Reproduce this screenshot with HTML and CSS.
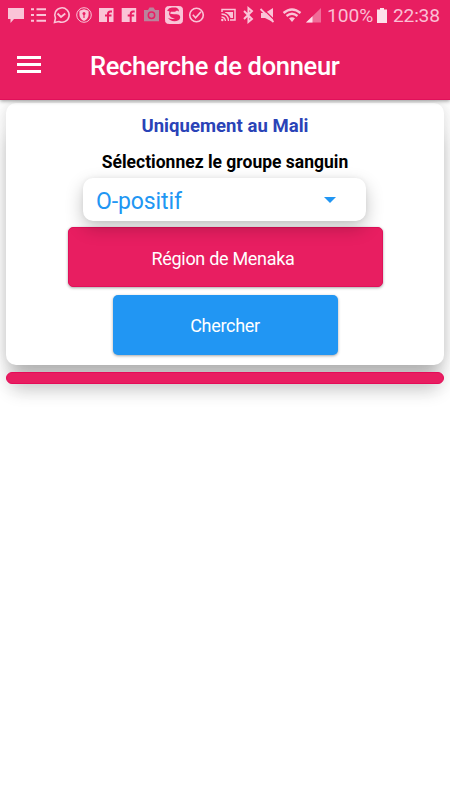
FILE: index.html
```html
<!DOCTYPE html>
<html lang="fr">
<head>
<meta charset="utf-8">
<title>Recherche de donneur</title>
<link rel="stylesheet" href="styles.css">
</head>
<body>
<header class="app-header">
  <div class="status">
    <svg class="status-icons" width="325" height="32" viewBox="0 0 325 32" fill="none" stroke="#fac4d7" stroke-width="1.6">
      <path d="M8 8H24V19H14L10.500 23V19H8Z" fill="#fac4d7" stroke="none"/>
      <path d="M31 9.200h3M31 15h3M31 20.800h3M36.500 9.200H46M36.500 15H46M36.500 20.800H46" stroke-width="2"/>
      <path d="M54.500 22.500l1-4.300A7.200 7.200 0 1 1 58.800 21.500Z"/><path d="M57.500 13.500l3.500 3.500 4.300-3.500" stroke-width="1.800"/>
      <circle cx="84" cy="15" r="7.300" stroke-width="1"/><path d="M84 9.200l4.600 1.600v4.100c0 2.600-2 4.800-4.600 6-2.600-1.200-4.600-3.400-4.600-6v-4.100Z" fill="#fac4d7" stroke="none"/><circle cx="84" cy="13.500" r="1.500" fill="#e91e63" stroke="none"/><path d="M84 14v4" stroke="#e91e63" stroke-width="1.200"/>
      <g id="fb"><rect x="99" y="8" width="14.500" height="14" fill="#fac4d7" stroke="none"/><path d="M108 22v-8q0-2.600 2.500-2.600h1.500M105 15.500h6.500" stroke="#e91e63" stroke-width="2"/></g>
      <use href="#fb" x="22.700"/>
      <path d="M144 10h4l1.500-2.500h4L155 10h4v11.200h-15Z" fill="#b9849c" stroke="none"/><circle cx="151.500" cy="15.200" r="3.200" stroke="#e91e63" stroke-width="1.500"/>
      <rect x="165.500" y="6.500" width="17" height="17" rx="3" fill="#fac4d7" stroke="#fac4d7" stroke-width="1"/>
      <path d="M167 10.500q2-3 5-3h4q3 1 3 4l-2-1-2 1.300h-4l-1 1.700q2 1 5 .8 4-.6 5 1.700 1 4-3.500 5-6 .8-8.500-3 4 1.500 7 .5-5-.5-6-4.500l.5-2.500Z" fill="#e91e63" stroke="none"/>
      <circle cx="196.500" cy="15" r="6.800"/><path d="M192.800 14.800l2.800 3 5.400-6"/>
      <path d="M222 12V9.500h13V20h-5" stroke-width="1.500"/><path d="M225 12h8v6h-2.500q-1-4-5.500-5.500Z" fill="#fac4d7" stroke="none"/><path d="M221.500 14q6.500 0 7 7M221.500 17q3.500.3 4 4" stroke-width="1.300"/><circle cx="222.300" cy="20" r="1.200" fill="#fac4d7" stroke="none"/>
      <path d="M244 11l8 8-3.600 3V8l3.600 3-8 8" stroke-width="1.900"/>
      <path d="M261 13h4l8-5v14l-8-4h-4Z" fill="#fac4d7" stroke="none"/><path d="M262.500 8.500l13 12.500" stroke="#e91e63" stroke-width="1.200"/><path d="M260.500 9l13 13" stroke-width="1.800"/>
      <path d="M283.500 13q8.500-7 17 0M286.500 16q5.500-4.500 11 0" stroke-width="2.300"/><path d="M289 18.300q3-2.200 6 0L292 22Z" fill="#fac4d7" stroke="none"/>
      <path d="M321 8v14.500h-15Z" fill="#f06c98" stroke="none"/><path d="M312.500 16.200v6.300H306Z" fill="#fde0ea" stroke="none"/>
    </svg>
    <span class="percent">100%</span>
    <svg class="battery" width="10" height="15" viewBox="0 0 10 15"><path d="M3 0h4v1.500h3V15H0V1.500h3Z" fill="#fde0ea"/></svg>
    <span class="clock">22:38</span>
  </div>
  <div class="toolbar">
    <button class="menu" aria-label="Menu"><i></i><i></i><i></i></button>
    <h1>Recherche de donneur</h1>
  </div>
</header>
<main>
  <section class="card">
    <h2>Uniquement au Mali</h2>
    <p class="label">Sélectionnez le groupe sanguin</p>
    <div class="select"><span>O-positif</span><svg width="12" height="6" viewBox="0 0 12 6"><path d="M0 0h12L6 6Z" fill="#2196f3"/></svg></div>
    <button class="btn region"><span>Région de Menaka</span></button>
    <button class="btn search"><span>Chercher</span></button>
  </section>
  <div class="strip"></div>
</main>
</body>
</html>
```
FILE: styles.css
```css
* { box-sizing: border-box; }
body { margin: 0; background: #fff; font-family: Roboto, sans-serif; height: 800px; overflow: hidden; }
h1, h2, p { margin: 0; white-space: nowrap; }
button { border: 0; padding: 0; font-family: inherit; }
.app-header { height: 100px; background: #e81e61; border-bottom: 1px solid #e0105a; position: relative; z-index: 2; box-shadow: 0 1px 4px rgba(0,0,0,.4); }
.status { height: 32px; display: flex; }
.status-icons { flex: none; }
.percent, .clock { color: #fbbfd4; font-size: 19.2px; line-height: 31px; white-space: nowrap; }
.percent { width: 48px; margin-left: 2px; }
.battery { margin: 7.500px 6px 0 2px; flex: none; }
.clock { letter-spacing: -.2px; }
.toolbar { height: 68px; display: flex; align-items: center; padding-left: 17px; }
.menu { width: 24px; height: 17px; background: none; display: flex; flex-direction: column; justify-content: space-between; margin-top: -3px; }
.menu i { height: 3px; width: 24px; background: #fff; }
h1 { margin-left: 49px; color: #fff; font-size: 25.5px; font-weight: 500; line-height: 30px; letter-spacing: -.3px; }
main { padding: 3px 6px 0; }
.card { height: 262px; border-radius: 10px; background: #fff; box-shadow: 0 30px 18px -5px rgba(0,0,0,.2), 0 12px 30px rgba(0,0,0,.07), 0 0 14px rgba(0,0,0,.12); display: flex; flex-direction: column; align-items: center; }
h2 { margin-top: 10px; color: #2a43b7; font-size: 18.5px; font-weight: 700; line-height: 26px; letter-spacing: .05px; }
.label { margin-top: 11px; font-size: 17.5px; font-weight: 700; line-height: 24px; letter-spacing: 0; }
.select { margin-top: 4px; margin-right: 1px; width: 283px; height: 43px; flex: none; border-radius: 10px; background: #fff; z-index: 1; display: flex; align-items: center; justify-content: space-between; padding: 3px 30px 0 13px; color: #2196f3; font-size: 23px; letter-spacing: -.1px; box-shadow: 0 7px 18px rgba(0,0,0,.23), 0 0 5px rgba(0,0,0,.06); }
.select svg { margin-top: -3px; }
.btn { display: flex; align-items: center; justify-content: center; color: #fff; height: 60px; flex: none; border-radius: 5px; font-size: 18px; letter-spacing: -.3px; box-shadow: 0 1px 3px rgba(0,0,0,.35); padding-top: 2px; }
.region { width: 315px; margin-top: 6px; background: #e81e61; border: 1px solid #e0105a; padding-right: 4px; }
.search { width: 225px; margin-top: 8px; background: #2196f3; padding-top: 1px; }
.strip { height: 12px; margin-top: 7px; position: relative; z-index: 1; border-radius: 6px; background: #e81e61; border: 1px solid #e50b58; }
```
